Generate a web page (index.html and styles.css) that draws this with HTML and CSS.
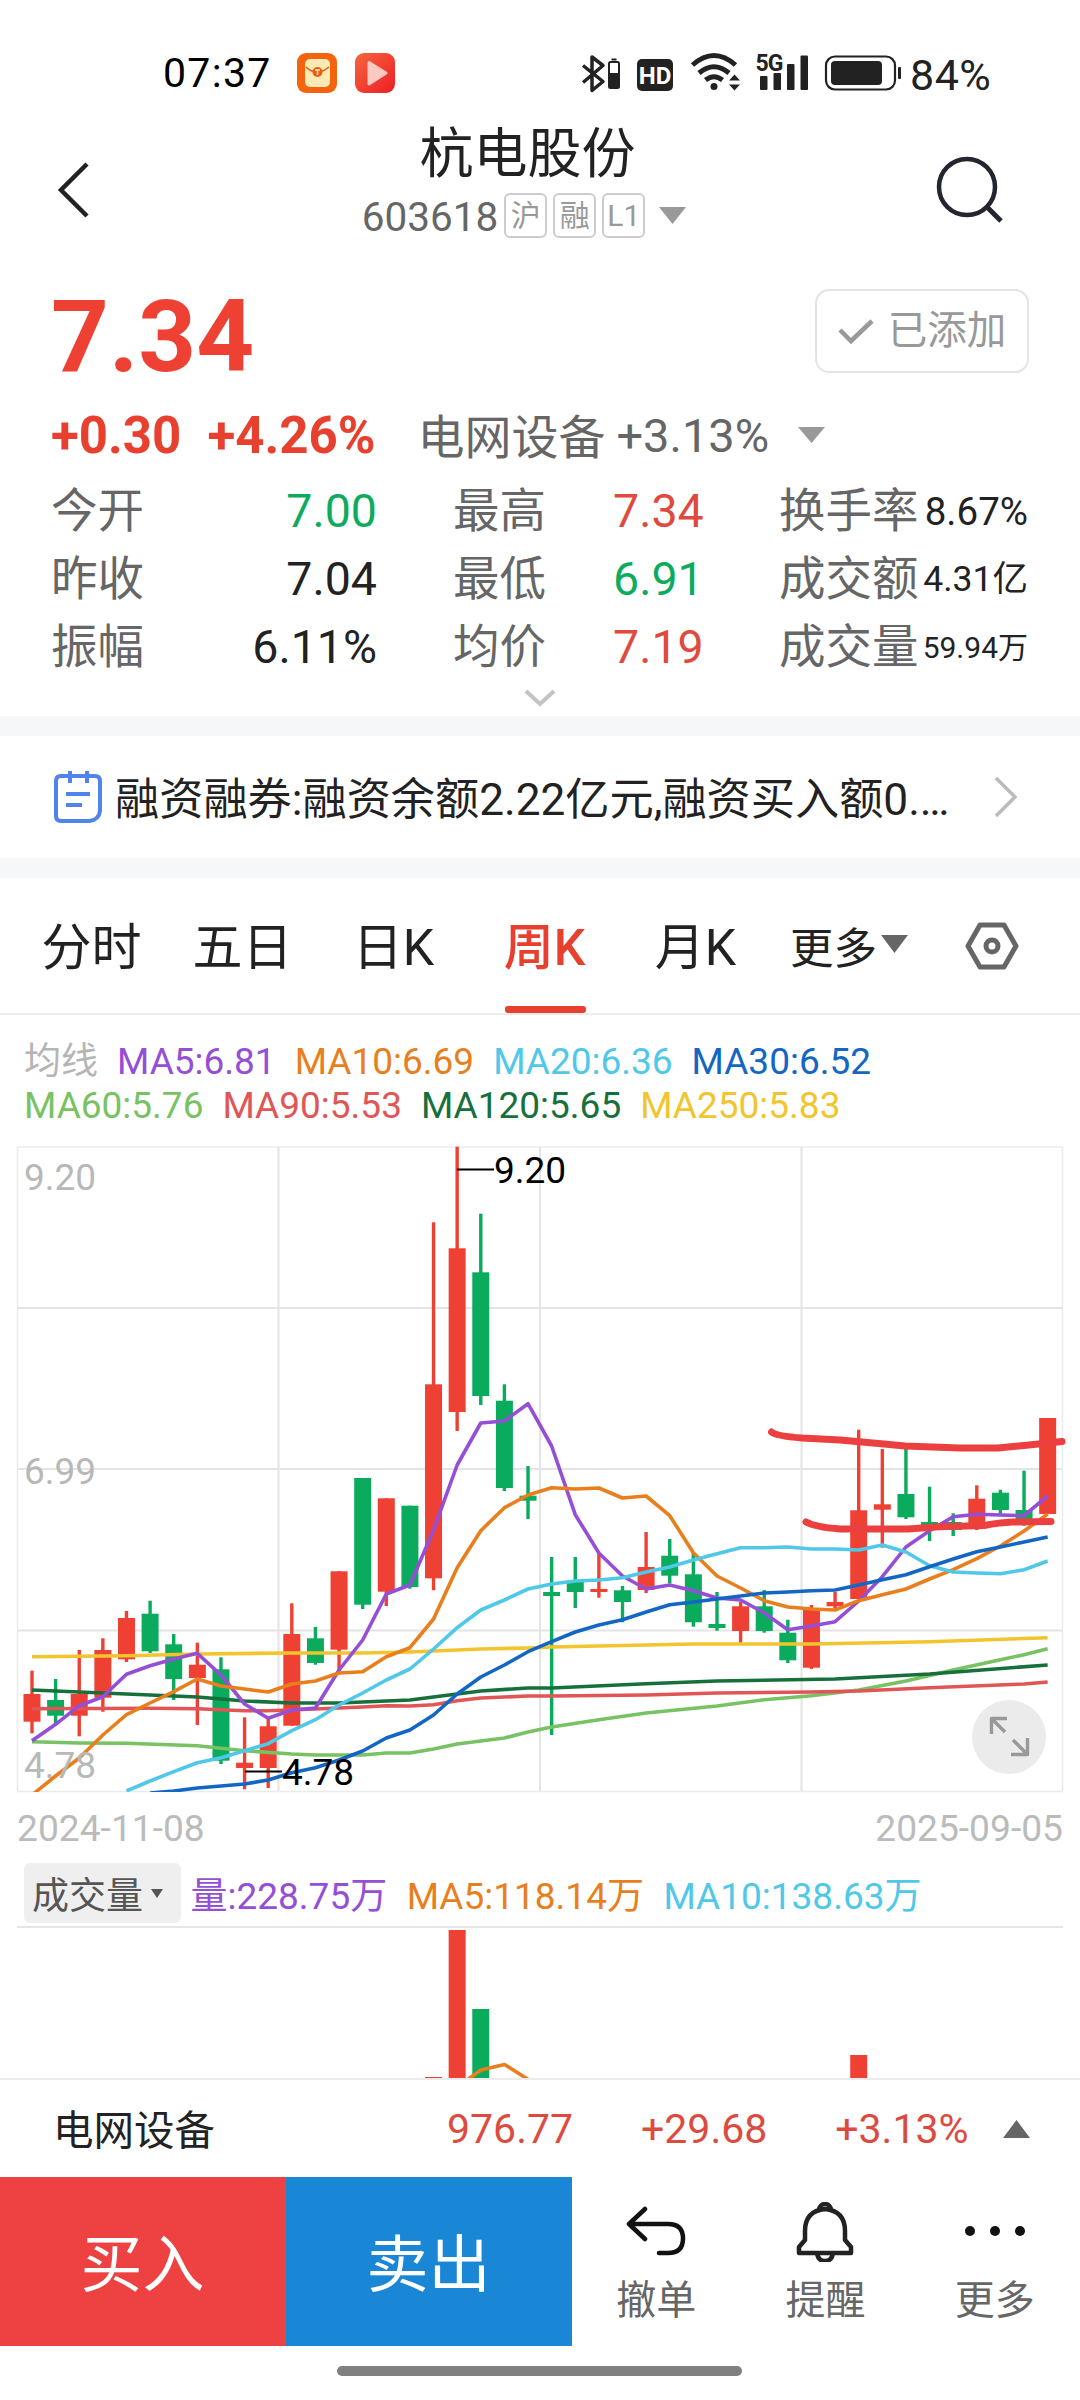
FILE: index.html
```html
<!DOCTYPE html>
<html lang="zh-CN">
<head>
    <meta charset="utf-8">
    <title>杭电股份 603618</title>
    <link rel="stylesheet" href="styles.css">
</head>
<body>
    <div class="status_bar">
        <span class="time">07:37</span>
        <svg class="app_icon" width="40" height="40" viewBox="0 0 40 40">
            <rect width="40" height="40" rx="9" fill="#f4640f"/>
            <rect x="8" y="6" width="25" height="28" rx="5" fill="#fde9b4"/>
            <path d="M9 14q5 5 11 5t12-5" fill="none" stroke="#e8590c" stroke-width="1.5"/>
            <circle cx="20.500" cy="19" r="5" fill="#ee5a12"/>
            <path d="M18 17h5M20.500 17v5" stroke="#fde9b4" stroke-width="1.5"/>
        </svg>
        <svg class="app_icon" width="40" height="40" viewBox="0 0 40 40">
            <defs>
                <linearGradient id="play_bg" x1="0" y1="0" x2="1" y2="1">
                    <stop offset="0" stop-color="#f4673f"/>
                    <stop offset="1" stop-color="#ee1c25"/>
                </linearGradient>
            </defs>
            <rect width="40" height="40" rx="9" fill="url(#play_bg)"/>
            <path d="M14 9.500L31 20 14 31z" fill="#fbc9c2" stroke="#fbc9c2" stroke-width="3" stroke-linejoin="round"/>
        </svg>
        <svg class="signal_icons" width="330" height="50" viewBox="578 48 330 50">
            <!-- bluetooth -->
            <path d="M583 65.500L603 81.500 592 90.500V57L603 65.500 583 82.500" fill="none" stroke="#222" stroke-width="3.500" stroke-linejoin="round"/>
            <rect x="609" y="62" width="10" height="26" rx="1.500" fill="#fff" stroke="#222" stroke-width="2"/>
            <rect x="609" y="73" width="10" height="15" fill="#222"/>
            <rect x="611.500" y="58.500" width="5" height="2" fill="#222"/>
            <rect x="637" y="59" width="36" height="32" rx="5" fill="#222"/>
            <text x="655" y="83.500" class="hd">HD</text>
            <!-- wifi -->
            <g fill="none" stroke="#222" stroke-width="5">
                <path d="M692.500 65q21.500-19 43 0"/>
                <path d="M699 73q15-12.500 30 0"/>
                <path d="M705.500 80q8.500-6.500 17 0"/>
            </g>
            <circle cx="714" cy="86.500" r="3.500" fill="#222"/>
            <path d="M729 80.500l5.500-6 5.500 6zM729 84.500l5.500 6 5.500-6z" fill="#222"/>
            <text x="755.500" y="71" class="net">5G</text>
            <rect x="760" y="76" width="7.500" height="14" rx="1" fill="#222"/>
            <rect x="773.500" y="73" width="7.500" height="17" rx="1" fill="#222"/>
            <rect x="787" y="64" width="7.500" height="26" rx="1" fill="#222"/>
            <rect x="800.500" y="55.500" width="7.500" height="34.500" rx="1" fill="#222"/>
            <rect x="826" y="56.500" width="69" height="33" rx="9" fill="none" stroke="#222" stroke-width="2.200"/>
            <rect x="831" y="61" width="51" height="24" rx="4" fill="#222"/>
            <rect x="898" y="67" width="3" height="12" rx="1" fill="#222"/>
        </svg>
        <span class="battery">84%</span>
    </div>

    <header class="header">
        <svg class="back" width="40" height="60" viewBox="0 0 40 60"><path d="M34 4L8 30 34 56" fill="none" stroke="#222" stroke-width="4.500"/></svg>
        <div class="title_box">
            <h1>杭电股份</h1>
            <div class="code">
                <span>603618</span>
                <i class="badge">沪</i><i class="badge">融</i><i class="badge">L1</i>
                <svg width="27" height="17" viewBox="0 0 27 17"><path d="M0 0h27L13.500 17z" fill="#999"/></svg>
            </div>
        </div>
        <svg class="search" width="70" height="70" viewBox="0 0 70 70">
            <circle cx="33" cy="33" r="28" fill="none" stroke="#23252f" stroke-width="4.500"/>
            <path d="M53 53L67 67" stroke="#23252f" stroke-width="5"/>
        </svg>
    </header>

    <section class="quote">
        <div class="price_row">
            <span class="price">7.34</span>
            <button class="added">
                <svg width="36" height="28" viewBox="0 0 36 28"><path d="M2 13L13 24 34 4" fill="none" stroke="#999" stroke-width="4.500"/></svg>
                已添加
            </button>
        </div>
        <div class="change_row">
            <b>+0.30</b><b class="percent">+4.26%</b>
            <span class="sector">电网设备</span><span>+3.13%</span>
            <svg width="27" height="16" viewBox="0 0 27 16"><path d="M0 0h27L13.500 16z" fill="#999"/></svg>
        </div>
        <div class="stats">
            <span>今开</span><em class="green">7.00</em>
            <span class="mid">最高</span><em class="red left">7.34</em>
            <span>换手率</span><em class="s38">8.67%</em>
            <span>昨收</span><em>7.04</em>
            <span class="mid">最低</span><em class="green left">6.91</em>
            <span>成交额</span><em class="s35">4.31亿</em>
            <span>振幅</span><em>6.11%</em>
            <span class="mid">均价</span><em class="red left">7.19</em>
            <span>成交量</span><em class="s30">59.94万</em>
        </div>
        <svg class="expand" width="32" height="18" viewBox="0 0 32 18"><path d="M2 2L16 15 30 2" fill="none" stroke="#c4c4c4" stroke-width="4"/></svg>
    </section>

    <section class="news">
        <svg width="48" height="54" viewBox="0 0 48 54" fill="none" stroke="#5084ea" stroke-width="4">
            <path d="M7 6h34q5 0 5 5v30Q45 50 35 51H7q-5 0-5-5V11q0-5 5-5z"/>
            <path d="M16 1v12M33 1v12M12 24h24M12 35h16" />
        </svg>
        <p>融资融券:融资余额2.22亿元,融资买入额0.…</p>
        <svg class="go" width="24" height="42" viewBox="0 0 24 42"><path d="M2 2L21 21 2 40" fill="none" stroke="#bbb" stroke-width="3.500"/></svg>
    </section>

    <nav class="tabs">
        <a>分时</a>
        <a>五日</a>
        <a>日K</a>
        <a class="active">周K</a>
        <a>月K</a>
        <span class="more">更多<svg width="27" height="18" viewBox="0 0 27 18"><path d="M0 0h27L13.500 18z" fill="#666"/></svg></span>
        <svg class="setting" width="54" height="48" viewBox="0 0 54 48" fill="none" stroke="#666" stroke-width="5">
            <path d="M15 3h24L51 24 39 45H15L3 24z" stroke-linejoin="round"/>
            <circle cx="27" cy="24" r="6"/>
        </svg>
    </nav>

    <div class="ma_list">
        <span style="color:#b5b5b5">均线</span>
        <span style="color:#944fd6">MA5:6.81</span>
        <span style="color:#e87f1c">MA10:6.69</span>
        <span style="color:#50c8e8">MA20:6.36</span>
        <span style="color:#1466c4">MA30:6.52</span>
    </div>
    <div class="ma_list second">
        <span style="color:#79c264">MA60:5.76</span>
        <span style="color:#e05555">MA90:5.53</span>
        <span style="color:#17703c">MA120:5.65</span>
        <span style="color:#f2c52e">MA250:5.83</span>
    </div>

    <svg id="kline" width="1080" height="660" viewBox="0 1140 1080 660"></svg>
    <div class="dates"><span>2024-11-08</span><span>2025-09-05</span></div>

    <div class="volume_head">
        <span class="picker">成交量<svg width="12" height="9" viewBox="0 0 12 9"><path d="M0 0h12L6 9z" fill="#555"/></svg></span>
        <span style="color:#944fd6">量:228.75万</span>
        <span style="color:#e87f1c">MA5:118.14万</span>
        <span style="color:#50c8e8">MA10:138.63万</span>
    </div>
    <svg id="volume" width="1080" height="152" viewBox="0 1926 1080 152"></svg>

    <div class="index_row">
        <span class="name">电网设备</span>
        <span>976.77</span>
        <span>+29.68</span>
        <span>+3.13%</span>
        <svg width="27" height="18" viewBox="0 0 27 18"><path d="M0 18h27L13.500 0z" fill="#666"/></svg>
    </div>

    <footer class="actions">
        <button class="buy">买入</button>
        <button class="sell">卖出</button>
        <div class="tool">
            <svg width="60" height="60" viewBox="0 0 60 60" fill="none" stroke="#111" stroke-width="4.500" stroke-linecap="round" stroke-linejoin="round">
                <path d="M19 7L3 22 19 37M4 22h38q15 0 15 14.500T42 51H33"/>
            </svg>
            <span>撤单</span>
        </div>
        <div class="tool">
            <svg width="60" height="60" viewBox="0 0 60 60" fill="none" stroke="#222" stroke-width="4.500" stroke-linejoin="round">
                <path d="M24 8a6 6 0 0 1 12 0M30 7Q50 9 50 29v9l6 7v6H4v-6l6-7v-9Q10 9 30 7zM22 51q1 8 8 8t8-8"/>
            </svg>
            <span>提醒</span>
        </div>
        <div class="tool">
            <svg width="60" height="60" viewBox="0 0 60 60" fill="#111">
                <circle cx="5" cy="29" r="5"/><circle cx="30" cy="29" r="5"/><circle cx="55" cy="29" r="5"/>
            </svg>
            <span>更多</span>
        </div>
    </footer>
    <div class="home_bar"></div>

    <script src="chart.js"></script>
</body>
</html>
```

FILE: styles.css
```css
* {
    box-sizing: border-box;
}
body {
    margin: 0;
    width: 1080px;
    height: 2400px;
    overflow: hidden;
    background: #fff;
    color: #222;
    font-family: Roboto, "Noto Sans CJK SC", sans-serif;
}
svg {
    display: block;
    flex: none;
}
span, em, b {
    white-space: nowrap;
}
button {
    border: 0;
    padding: 0;
    font-family: inherit;
}

/* status bar */
.status_bar {
    display: flex;
    align-items: center;
    height: 110px;
    padding: 36px 0 0 163px;
    line-height: 74px;
}
.time {
    width: 134px;
    font-size: 41px;
    letter-spacing: 1.3px;
    color: #000;
}
.app_icon {
    margin-right: 18px;
}
.signal_icons {
    margin-left: 165px;
}
.battery {
    margin-left: 2px;
    font-size: 43px;
    letter-spacing: 0.5px;
    padding-top: 3px;
}
.hd, .net {
    font-weight: 700;
}
.hd {
    font-size: 24px;
    fill: #fff;
    text-anchor: middle;
}
.net {
    font-size: 23px;
    letter-spacing: -1px;
    fill: #222;
}

/* header */
.header {
    display: flex;
    align-items: flex-start;
    justify-content: space-between;
    height: 160px;
    padding: 0 76px 0 53px;
}
.back {
    margin-top: 50px;
}
.search {
    margin-top: 44px;
}
.title_box {
    display: flex;
    flex-direction: column;
    align-items: center;
    width: 330px;
    margin-left: 21px;
}
h1 {
    margin: 12px 0 0 7px;
    font-size: 54px;
    font-weight: 400;
    line-height: 66px;
}
.code {
    display: flex;
    align-items: center;
    margin-top: 2px;
    line-height: 50px;
    font-size: 40.5px;
    color: #666;
}
.code span {
    padding-top: 2px;
}
.badge {
    width: 43px;
    height: 45px;
    margin: 0 0 2px 6px;
    border: 2px solid #ccc;
    border-radius: 6px;
    font-size: 30px;
    font-style: normal;
    line-height: 41px;
    text-align: center;
    color: #999;
}
.code svg {
    margin: 0 0 2px 14px;
}

/* quote */
.quote {
    height: 466px;
    border-bottom: 20px solid #f6f7f9;
}
.price_row {
    display: flex;
    justify-content: space-between;
    padding: 19px 51px 0 51px;
    height: 126px;
}
.price {
    font-size: 101px;
    font-weight: 700;
    line-height: 96px;
    color: #ee4133;
}
.added {
    display: flex;
    align-items: center;
    justify-content: center;
    gap: 14px;
    width: 214px;
    height: 84px;
    border: 2px solid #e4e4e4;
    border-radius: 14px;
    background: #fff;
    font-size: 39.5px;
    line-height: 54px;
    color: #999;
}
.change_row {
    display: flex;
    align-items: center;
    height: 78px;
    padding-left: 51px;
    font-size: 47px;
    color: #666;
}
.change_row b {
    font-size: 51px;
    color: #e8402f;
}
.percent {
    margin-left: 26px;
}
.sector {
    margin: 0 11px 3px 42px;
}
.change_row svg {
    margin-left: 29px;
}
.stats {
    display: grid;
    grid-template-columns: 93px 233px 168px 234px 143px 106px;
    grid-auto-rows: 68px;
    margin-top: 3px;
    padding-left: 51px;
    font-size: 46.5px;
    line-height: 69px;
    color: #666;
}
.stats .mid {
    padding-left: 76px;
}
.stats em {
    font-style: normal;
    text-align: right;
    color: #222;
}
.stats em.left {
    text-align: left;
    padding-left: 68px;
}
.stats em.green {
    color: #0dab5d;
}
.stats em.red {
    color: #e04a3e;
}
.stats .s38 {
    font-size: 38.5px;
}
.stats .s35 {
    font-size: 35.5px;
}
.stats .s30 {
    font-size: 30px;
}
.expand {
    margin: 8px auto 0;
}

/* news */
.news {
    display: flex;
    align-items: center;
    height: 142px;
    padding: 0 62px 0 54px;
    border-bottom: 20px solid #f6f7f9;
}
.news p {
    margin: 0 0 3px 13px;
    font-size: 44.2px;
    white-space: nowrap;
}
.go {
    margin-left: auto;
}

/* period tabs */
.tabs {
    display: flex;
    align-items: center;
    height: 137px;
    padding-left: 16px;
    border-bottom: 2px solid #ececec;
    font-size: 50px;
}
.tabs a {
    display: flex;
    justify-content: center;
    width: 151px;
    height: 135px;
    line-height: 140px;
}
.tabs .active {
    position: relative;
    color: #e8402f;
    font-weight: 500;
}
.active::after {
    content: "";
    position: absolute;
    left: 36px;
    bottom: 0;
    width: 81px;
    height: 7px;
    border-radius: 3px;
    background: #e8402f;
}
.more {
    display: flex;
    align-items: center;
    margin-left: 19px;
    font-size: 43.5px;
    gap: 4px;
}
.more svg {
    margin-bottom: 3px;
}
.setting {
    margin-left: 57px;
}

/* charts */
.ma_list {
    display: flex;
    gap: 19px;
    padding: 25px 0 0 24px;
    font-size: 37px;
    line-height: 44px;
}
.second {
    padding-top: 0;
    margin-bottom: 12px;
}
.label {
    font-size: 37px;
}
.dates {
    display: flex;
    justify-content: space-between;
    padding: 5px 17px 0;
    height: 63px;
    font-size: 37.2px;
    line-height: 46px;
    color: #bbb;
}
.volume_head {
    display: flex;
    align-items: center;
    gap: 19.500px;
    height: 63px;
    padding: 0 0 3px 24px;
    font-size: 37px;
}
.picker {
    display: flex;
    align-items: center;
    gap: 8px;
    width: 157px;
    height: 60px;
    margin-right: -10px;
    padding-left: 8px;
    border-radius: 6px;
    background: #efefef;
    color: #555;
}

/* bottom */
.index_row {
    display: flex;
    align-items: center;
    height: 99px;
    padding-left: 53px;
    border-top: 2px solid #ececec;
    font-size: 41px;
    color: #dd4a40;
}
.index_row .name {
    width: 394px;
    padding-bottom: 3px;
    font-size: 40.5px;
    color: #222;
}
.index_row span + span + span {
    margin-left: 68px;
}
.index_row svg {
    margin-left: 34px;
}
.actions {
    display: flex;
    height: 169px;
}
.buy, .sell {
    width: 286px;
    padding: 0 1px 3px 0;
    font-size: 62px;
    color: #fff;
    background: #ee4242;
}
.sell {
    background: #1986d6;
}
.tool {
    flex: 1;
    display: flex;
    flex-direction: column;
    align-items: center;
    padding: 25px 1px 0 0;
    font-size: 40px;
    line-height: 60px;
    color: #666;
}
.tool span {
    margin-top: 9px;
}
.home_bar {
    width: 405px;
    height: 10px;
    margin: 20px 0 0 337px;
    border-radius: 5px;
    background: #808080;
}
```

FILE: chart.js
```js
var RED = '#ee4133', GREEN = '#0aab5d';

// [direction, high, low, body top, body bottom]
var candles = [
    ['r', 1670.7, 1733.3, 1694, 1721.7], ['g', 1679, 1724, 1700, 1715.7],
    ['r', 1650, 1736.3, 1694, 1715.7], ['r', 1638.3, 1711.7, 1650, 1697.7],
    ['r', 1611, 1662, 1618, 1659.3], ['g', 1600.7, 1653, 1613.7, 1651.3],
    ['g', 1634, 1700, 1644.3, 1679], ['r', 1642.7, 1725, 1664.7, 1678],
    ['g', 1657.3, 1764, 1669.3, 1760.7], ['r', 1717.3, 1789.3, 1762.7, 1768],
    ['r', 1718.3, 1788, 1726.3, 1768], ['r', 1603.3, 1725.7, 1634, 1725.7],
    ['g', 1627, 1664.7, 1638.3, 1663], ['r', 1571.3, 1671.7, 1571.3, 1649.7],
    ['g', 1478, 1609, 1478, 1604.7], ['r', 1498.3, 1606, 1498.3, 1591.7],
    ['g', 1505.7, 1588.7, 1505.7, 1587], ['r', 1222.3, 1590.3, 1384.3, 1578.3],
    ['r', 1146.7, 1431, 1248.3, 1412], ['g', 1213.7, 1405, 1272.3, 1396],
    ['g', 1384.3, 1491, 1400.7, 1488], ['g', 1466, 1519, 1495.7, 1500.7],
    ['g', 1557, 1735, 1592, 1596], ['g', 1557, 1608, 1580.7, 1592],
    ['r', 1553.3, 1597.7, 1589, 1592], ['g', 1586, 1622.3, 1590.3, 1602],
    ['r', 1532, 1593, 1567, 1590], ['g', 1539, 1583.3, 1555.7, 1575.7],
    ['g', 1553, 1626.7, 1574.3, 1622.3], ['g', 1592, 1630.7, 1624, 1628],
    ['r', 1602, 1643.3, 1606.3, 1631], ['g', 1590, 1632.7, 1606.3, 1631],
    ['g', 1619.7, 1663, 1632.7, 1660.3], ['r', 1605, 1669, 1610, 1667.7],
    ['r', 1592, 1608.7, 1602, 1606.3], ['r', 1429.7, 1599, 1510.3, 1599],
    ['r', 1449, 1547.7, 1504.3, 1509.7], ['g', 1447, 1519, 1494, 1517.3],
    ['g', 1486.7, 1541, 1522, 1526.7], ['g', 1513.3, 1536, 1522, 1530],
    ['r', 1485.3, 1530, 1498.7, 1526.7], ['g', 1489.7, 1514, 1492.7, 1510],
    ['g', 1470.7, 1525.7, 1510, 1519], ['r', 1418, 1514, 1418, 1514]
];

// moving averages, [index, y]
var lines = [
    { color: '#79c264', pts: [[0,1741.7],[2,1743],[4,1743.3],[7,1745.7],[9,1750.7],[11,1754],[12,1755],[14,1755],[15,1753],[16,1753],[17,1749],[18,1744],[19,1741],[20,1738],[21,1732],[22,1727],[24,1719.7],[26,1713],[29,1706],[31,1699.7],[33,1695.7],[35,1690],[37,1681],[39,1670],[41,1659.7],[42,1654.7],[43,1648.7]] },
    { color: '#e05555', pts: [[0,1708.7],[5,1708.3],[7,1708.7],[9,1710.7],[10,1710.7],[12,1709],[14,1707],[15,1705.7],[16,1706],[17,1704.7],[18,1700.7],[19,1698],[21,1696],[22,1696],[26,1695],[29,1693],[33,1692],[35,1691],[38,1687.7],[42,1684],[43,1682]] },
    { color: '#17703c', pts: [[0,1690],[3,1693],[7,1697],[9,1701],[11,1703],[13,1703],[14,1702],[16,1700],[18,1694],[19,1691],[21,1688],[22,1688],[26,1683.7],[29,1681],[34,1679],[38,1674],[43,1665]] },
    { color: '#f2c52e', pts: [[0,1656.7],[4,1655.7],[7,1654],[11,1653],[14,1653],[16,1652],[19,1649],[21,1648],[22,1647],[28,1644],[33,1644],[38,1641.7],[43,1637.7]] },
    { color: '#944fd6', ys: [1740.7,1724.3,1705.7,1696.7,1674.3,1665.7,1659,1653.3,1675,1704,1718.3,1710,1708,1670,1640,1594,1585,1530,1465,1423,1421,1403.7,1446,1514.7,1553,1576,1589,1585,1590.7,1598,1600,1613,1629.7,1626,1621.7,1601,1576.7,1547,1530.7,1516.7,1514.3,1515,1515.7,1496] },
    { color: '#e87f1c', ys: [1795,1776,1758,1735,1714.7,1703,1691.7,1679,1686,1689,1692,1684,1681,1673,1671.7,1656.7,1647.7,1619,1567.7,1530.7,1507.7,1495,1487.7,1489,1488,1498,1496,1515.7,1552.7,1576,1588,1600.7,1607,1609,1610,1600.7,1594.7,1589,1579,1569.7,1558.7,1546,1531,1514] },
    { color: '#50c8e8', from: 4, ys: [1791,1781,1771.7,1762.7,1757.7,1750.7,1743.7,1730.7,1719.7,1705,1693,1680,1669,1649,1627.7,1610,1600,1589,1584,1581,1580,1577.7,1572,1567,1560,1553.7,1547.7,1547.7,1547,1549,1549,1550,1545,1552,1565.7,1572,1573,1573.7,1569.7,1561] },
    { color: '#1466c4', from: 5, ys: [1793,1791,1788,1786,1784,1780,1772.7,1767.7,1760,1751,1738,1730,1715,1694,1677,1665,1651.7,1641.7,1632,1625,1619.7,1612,1604.7,1602,1599,1596,1593,1592,1590.7,1590,1585,1579.7,1574.7,1566.7,1559,1551.7,1547,1542,1537] }
];

function px(i) {
    return 32 + i * 23.62;
}
function rect(x, y, w, h, fill) {
    return '<rect x="' + x + '" y="' + y + '" width="' + w + '" height="' + h + '" fill="' + fill + '"/>';
}
function path(d, color, width) {
    return '<path d="' + d + '" fill="none" stroke="' + color + '" stroke-width="' + width + '" stroke-linejoin="round"/>';
}
function text(x, y, value, fill) {
    return '<text class="label" x="' + x + '" y="' + y + '" fill="' + fill + '">' + value + '</text>';
}

function drawKline() {
    var out = '<clipPath id="plot"><rect x="17" y="1146" width="1046" height="646"/></clipPath>';
    out += path('M17.5 1147H1062.5V1791.500H17.5z', '#ebebeb', 1.5);
    out += path('M278.5 1147V1791M540 1147V1791M801.5 1147V1791M18 1308H1062M18 1469H1062M18 1630.500H1062', '#e4e4e4', 2);

    candles.forEach(function (c, i) {
        var color = c[0] === 'r' ? RED : GREEN;
        out += rect(px(i) - 1.7, c[1], 3.4, c[2] - c[1], color);
        out += rect(px(i) - 8.5, c[3], 17, c[4] - c[3], color);
    });

    out += '<g clip-path="url(#plot)">';
    lines.forEach(function (line) {
        var pts = line.pts || line.ys.map(function (y, i) { return [i + (line.from || 0), y]; });
        out += path('M' + pts.map(function (p) { return px(p[0]) + ' ' + p[1]; }).join('L'), line.color, 3.6);
    });
    out += '</g>';

    // price axis
    out += text(24, 1190, '9.20', '#b8b8b8') + text(24, 1484, '6.99', '#b8b8b8') + text(24, 1778, '4.78', '#b8b8b8');
    // highest and lowest
    out += path('M457 1169.500H494M245 1771.500H282', '#000', 1.8);
    out += text(494, 1183, '9.20', '#000') + text(282, 1784.5, '4.78', '#000');

    // hand drawn range
    out += '<g stroke-linecap="round">';
    out += path('M771.500 1432Q776 1436 802 1438L840 1440 884 1444 905 1446 960 1448H998L1029 1445 1062 1441.500', '#ec4040', 7);
    out += path('M806 1522Q815 1527 840 1529H908L939 1526.700 984 1525.500Q1000 1522.500 1012 1522L1051 1521.500', '#ec4040', 7);
    out += '</g>';

    // full screen
    out += '<circle cx="1009" cy="1737" r="37" fill="#ebebeb"/>';
    out += path('M1007 1718.500H991.5V1734M991.5 1718.500L1005 1732M1011 1754.500H1027.5V1738M1027.5 1754.500L1013 1740', '#999', 3.4);
    document.getElementById('kline').innerHTML = out;
}

function drawVolume() {
    var out = rect(17, 1926, 1046, 2, '#e6e6e6');
    out += rect(px(17) - 8.5, 2077, 17, 1, RED);
    out += rect(px(18) - 8.5, 1930, 17, 148, RED);
    out += rect(px(19) - 8.5, 2009, 17, 69, GREEN);
    out += rect(px(35) - 8.5, 2055, 17, 23, RED);
    out += path('M467 2080L481 2070 504.500 2064.500 529 2080', '#e87f1c', 3.6);
    document.getElementById('volume').innerHTML = out;
}

drawKline();
drawVolume();
```
